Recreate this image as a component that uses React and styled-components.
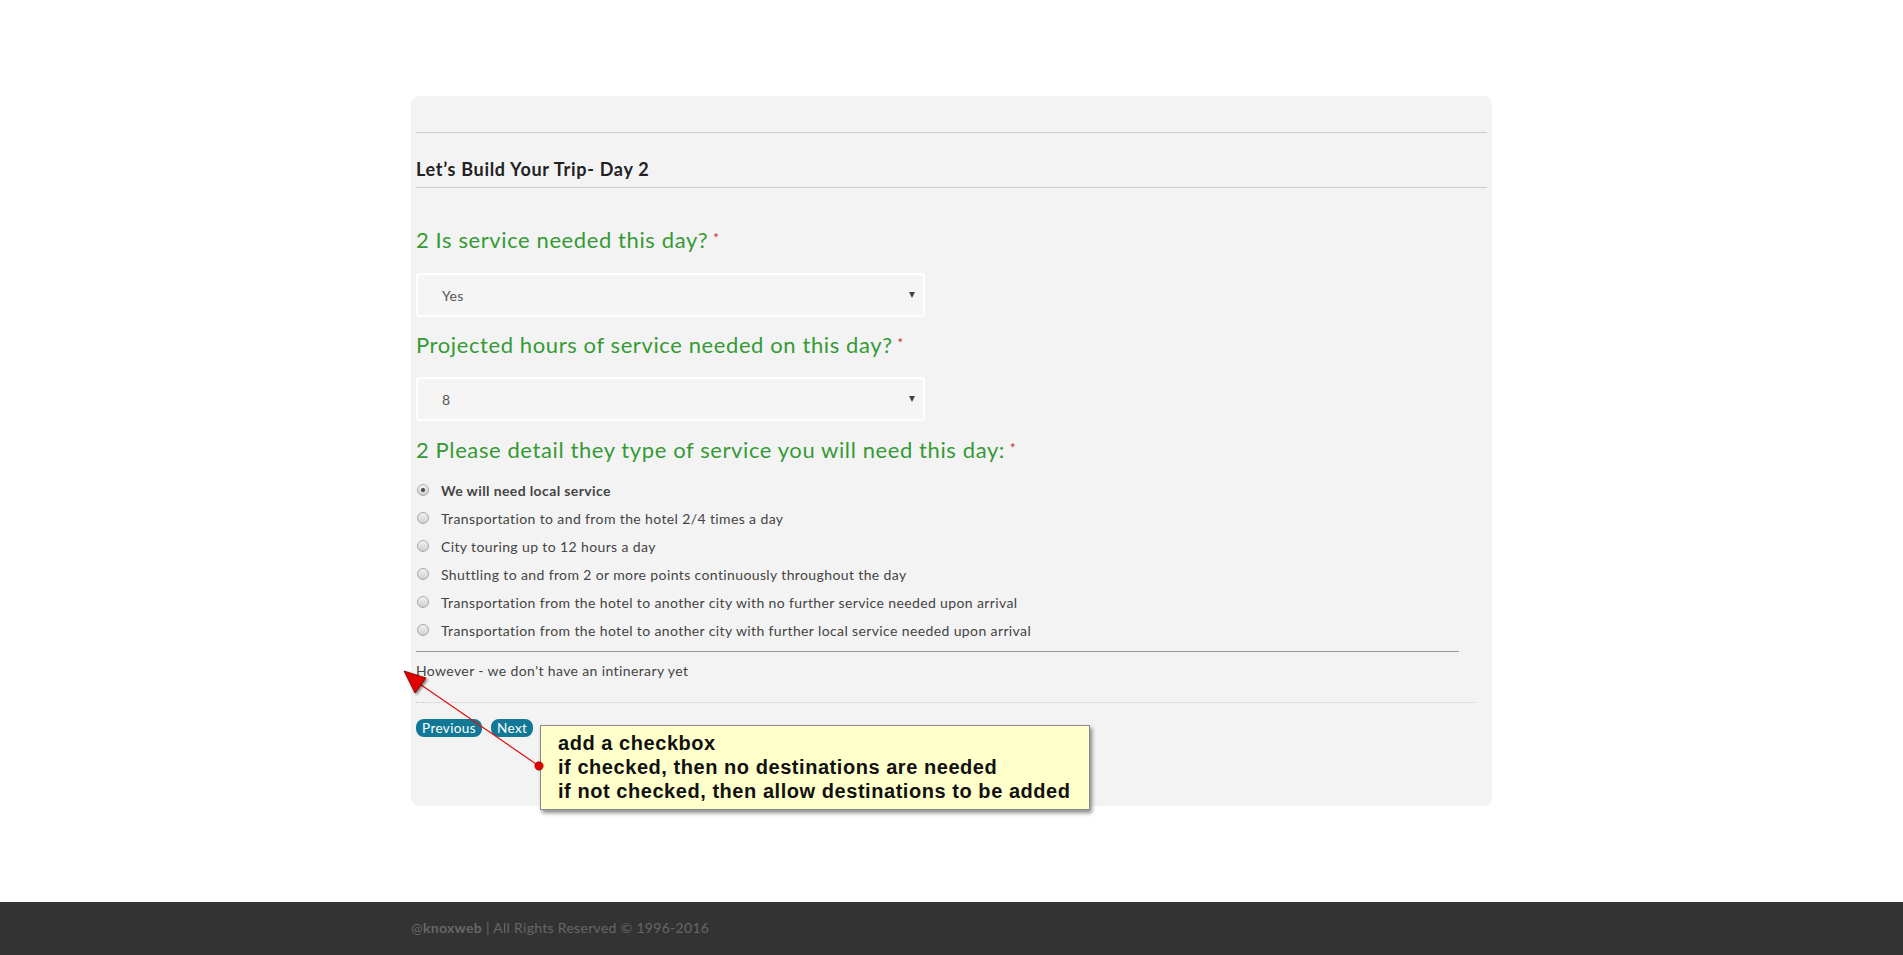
import React from "react";
import styled, { createGlobalStyle } from "styled-components";

const GlobalStyle = createGlobalStyle`
  html, body {
    margin: 0;
    padding: 0;
    background: #fff;
    font-family: Lato, "Open Sans", sans-serif;
    color: #444;
  }
  * { box-sizing: border-box; }
`;

export const Page = styled.div`
  display: flex;
  flex-direction: column;
  min-height: 955px;
`;

export const Main = styled.main`
  padding-top: 96px;
  flex: 1;
`;

export const Card = styled.div`
  position: relative;
  width: 1081px;
  margin: 0 auto;
  background: #f3f3f3;
  border-radius: 8px;
  padding: 36px 5px 69px 5px;
`;

export const Rule = styled.div`
  height: 0;
  border-top: 1px ${(p) => (p.dotted ? "dotted" : "solid")} ${(p) => p.color || "#cccccc"};
  width: ${(p) => p.width || "100%"};
  margin-top: ${(p) => p.top || 0}px;
`;

export const Title = styled.h3`
  margin: 0;
  padding: 26px 0 8px;
  font-size: 18px;
  line-height: 20px;
  font-weight: 700;
  letter-spacing: 0.7px;
  color: #222;
`;

export const Question = styled.label`
  display: block;
  margin-top: ${(p) => p.top}px;
  font-size: 22px;
  line-height: 30px;
  font-weight: 400;
  letter-spacing: 0.6px;
  color: #359a35;
`;

export const Required = styled.span`
  color: #c62828;
  font-size: 13px;
  vertical-align: top;
  margin-left: 5px;
  position: relative;
  top: -2px;
`;

export const SelectBox = styled.div`
  display: flex;
  align-items: center;
  justify-content: space-between;
  width: 509px;
  height: 44px;
  margin-top: ${(p) => p.top}px;
  padding: 0 8px 0 24px;
  background: #f5f5f5;
  border: 2px solid #fff;
  border-radius: 4px;
  font-size: 14px;
  letter-spacing: 0.3px;
  color: #555;
`;

export const Caret = styled.span`
  width: 0;
  height: 0;
  border-left: 3.5px solid transparent;
  border-right: 3.5px solid transparent;
  border-top: 6px solid #444;
`;

export const RadioList = styled.ul`
  list-style: none;
  margin: 11px 0 0;
  padding: 0;
`;

export const RadioRow = styled.li`
  display: flex;
  align-items: center;
  height: 28px;
  padding-left: 1px;
  font-size: 14px;
  letter-spacing: 0.38px;
  color: #444;
  font-weight: ${(p) => (p.checked ? 700 : 400)};
`;

export const RadioDot = styled.span`
  position: relative;
  flex: none;
  width: 12px;
  height: 12px;
  margin-right: 12px;
  border-radius: 50%;
  border: 1px solid #a8a8a8;
  background: linear-gradient(#f2f2f2, #cfcfcf);
  &::after {
    content: "";
    display: ${(p) => (p.checked ? "block" : "none")};
    position: absolute;
    left: 3px;
    top: 3px;
    width: 4px;
    height: 4px;
    border-radius: 50%;
    background: #444;
  }
`;

export const Note = styled.p`
  margin: 9px 0 0;
  font-size: 14px;
  line-height: 20px;
  letter-spacing: 0.38px;
  color: #444;
`;

export const ButtonRow = styled.div`
  display: flex;
  gap: 9px;
  margin-top: 16px;
`;

export const NavButton = styled.button`
  height: 18px;
  padding: 0 6px;
  border: none;
  border-radius: 8px;
  background: #117995;
  color: #fff;
  font-family: Lato, sans-serif;
  font-size: 13.5px;
  letter-spacing: 0.4px;
  line-height: 18px;
`;

export const Callout = styled.div`
  position: absolute;
  left: 129px;
  top: 629px;
  width: 550px;
  height: 85px;
  padding: 5px 0 0 17px;
  background: #ffffcc;
  border: 1px solid #8a8a8a;
  box-shadow: 2px 3px 4px rgba(0, 0, 0, 0.45);
  font-family: "Liberation Sans", Arial, sans-serif;
  font-weight: 700;
  font-size: 20px;
  letter-spacing: 0.55px;
  line-height: 24px;
  color: #111;
  white-space: nowrap;
  z-index: 2;
`;

export const Pointer = styled.svg`
  position: absolute;
  left: -20px;
  top: 560px;
  z-index: 3;
  overflow: visible;
`;

export const Footer = styled.footer`
  height: 53px;
  background: #333;
  margin-top: 96px;
`;

export const FooterInner = styled.div`
  width: 1081px;
  margin: 0 auto;
  padding-top: 17px;
  font-size: 14px;
  letter-spacing: 0.3px;
  line-height: 18px;
  color: #666;
  b { font-weight: 700; }
`;

const options = [
  "We will need local service",
  "Transportation to and from the hotel 2/4 times a day",
  "City touring up to 12 hours a day",
  "Shuttling to and from 2 or more points continuously throughout the day",
  "Transportation from the hotel to another city with no further service needed upon arrival",
  "Transportation from the hotel to another city with further local service needed upon arrival",
];

// card origin is (411, 96); tip (404,671) -> (-7,575), dot (539,766) -> (128,670)
const ArrowNote = () => (
  <Pointer width="170" height="130" viewBox="0 0 170 130">
    <defs>
      <filter id="sh" x="-50%" y="-50%" width="200%" height="200%">
        <feDropShadow dx="1.5" dy="1.5" stdDeviation="1" floodColor="#000" floodOpacity="0.5" />
      </filter>
    </defs>
    <line x1="148" y1="110" x2="20" y2="22" stroke="#e01010" strokeWidth="1.2" />
    <polygon points="13,15 35,22 24,37" fill="#e00000" stroke="#7a0000" strokeWidth="0.8" filter="url(#sh)" />
    <circle cx="148" cy="110" r="4.2" fill="#e00000" stroke="#900" strokeWidth="0.6" />
  </Pointer>
);

export default function App() {
  return (
    <Page>
      <GlobalStyle />
      <Main>
        <Card>
          <Rule />
          <Title>Let’s Build Your Trip- Day 2</Title>
          <Rule />

          <Question top={37}>
            2 Is service needed this day?<Required>*</Required>
          </Question>
          <SelectBox top={18}>
            <span>Yes</span>
            <Caret />
          </SelectBox>

          <Question top={13}>
            Projected hours of service needed on this day?<Required>*</Required>
          </Question>
          <SelectBox top={17}>
            <span>8</span>
            <Caret />
          </SelectBox>

          <Question top={14}>
            2 Please detail they type of service you will need this day:<Required>*</Required>
          </Question>
          <RadioList>
            {options.map((o, i) => (
              <RadioRow key={o} checked={i === 0}>
                <RadioDot checked={i === 0} />
                {o}
              </RadioRow>
            ))}
          </RadioList>

          <Rule color="#999" width="1043px" top={7} />
          <Note>However - we don't have an intinerary yet</Note>
          <Rule dotted color="#c8c8c8" width="1060px" top={21} />

          <ButtonRow>
            <NavButton>Previous</NavButton>
            <NavButton>Next</NavButton>
          </ButtonRow>

          <ArrowNote />
          <Callout>
            add a checkbox
            <br />
            if checked, then no destinations are needed
            <br />
            if not checked, then allow destinations to be added
          </Callout>
        </Card>
      </Main>
      <Footer>
        <FooterInner>
          @<b>knoxweb</b> | All Rights Reserved © 1996-2016
        </FooterInner>
      </Footer>
    </Page>
  );
}
